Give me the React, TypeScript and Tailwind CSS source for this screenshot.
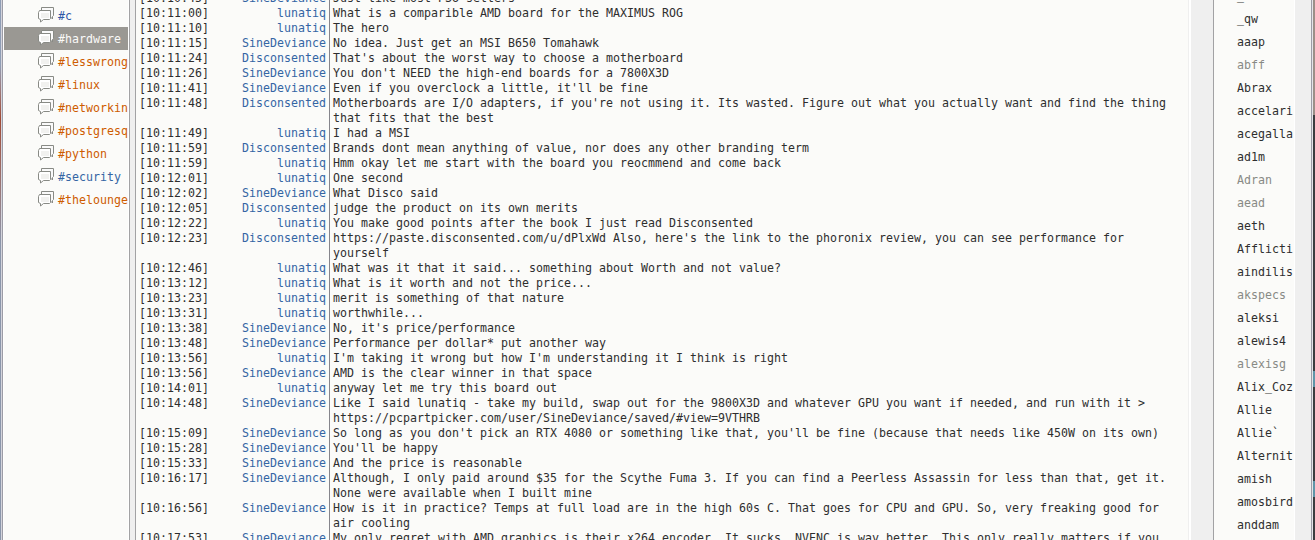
import React from "react";

interface Channel {
  name: string;
  color: string;
}

interface Message {
  time: string;
  nick: string;
  text: string;
}

const channels: Channel[] = [
  { name: "#c", color: "text-[#2e57a8]" },
  { name: "#hardware", color: "bg-[#9a9893] text-[#fafaf8]" },
  { name: "#lesswrong", color: "text-[#ce5c00]" },
  { name: "#linux", color: "text-[#ce5c00]" },
  { name: "#networkin", color: "text-[#ce5c00]" },
  { name: "#postgresq", color: "text-[#ce5c00]" },
  { name: "#python", color: "text-[#ce5c00]" },
  { name: "#security", color: "text-[#3465a4]" },
  { name: "#thelounge", color: "text-[#ce5c00]" },
];

const messages: Message[] = [
  { time: "10:10:45", nick: "SineDeviance", text: "Just like most PSU sellers" },
  { time: "10:11:00", nick: "lunatiq", text: "What is a comparible AMD board for the MAXIMUS ROG" },
  { time: "10:11:10", nick: "lunatiq", text: "The hero" },
  { time: "10:11:15", nick: "SineDeviance", text: "No idea. Just get an MSI B650 Tomahawk" },
  { time: "10:11:24", nick: "Disconsented", text: "That's about the worst way to choose a motherboard" },
  { time: "10:11:26", nick: "SineDeviance", text: "You don't NEED the high-end boards for a 7800X3D" },
  { time: "10:11:41", nick: "SineDeviance", text: "Even if you overclock a little, it'll be fine" },
  { time: "10:11:48", nick: "Disconsented", text: "Motherboards are I/O adapters, if you're not using it. Its wasted. Figure out what you actually want and find the thing\nthat fits that the best" },
  { time: "10:11:49", nick: "lunatiq", text: "I had a MSI" },
  { time: "10:11:59", nick: "Disconsented", text: "Brands dont mean anything of value, nor does any other branding term" },
  { time: "10:11:59", nick: "lunatiq", text: "Hmm okay let me start with the board you reocmmend and come back" },
  { time: "10:12:01", nick: "lunatiq", text: "One second" },
  { time: "10:12:02", nick: "SineDeviance", text: "What Disco said" },
  { time: "10:12:05", nick: "Disconsented", text: "judge the product on its own merits" },
  { time: "10:12:22", nick: "lunatiq", text: "You make good points after the book I just read Disconsented" },
  { time: "10:12:23", nick: "Disconsented", text: "https://paste.disconsented.com/u/dPlxWd Also, here's the link to the phoronix review, you can see performance for\nyourself" },
  { time: "10:12:46", nick: "lunatiq", text: "What was it that it said... something about Worth and not value?" },
  { time: "10:13:12", nick: "lunatiq", text: "What is it worth and not the price..." },
  { time: "10:13:23", nick: "lunatiq", text: "merit is something of that nature" },
  { time: "10:13:31", nick: "lunatiq", text: "worthwhile..." },
  { time: "10:13:38", nick: "SineDeviance", text: "No, it's price/performance" },
  { time: "10:13:48", nick: "SineDeviance", text: "Performance per dollar* put another way" },
  { time: "10:13:56", nick: "lunatiq", text: "I'm taking it wrong but how I'm understanding it I think is right" },
  { time: "10:13:56", nick: "SineDeviance", text: "AMD is the clear winner in that space" },
  { time: "10:14:01", nick: "lunatiq", text: "anyway let me try this board out" },
  { time: "10:14:48", nick: "SineDeviance", text: "Like I said lunatiq - take my build, swap out for the 9800X3D and whatever GPU you want if needed, and run with it >\nhttps://pcpartpicker.com/user/SineDeviance/saved/#view=9VTHRB" },
  { time: "10:15:09", nick: "SineDeviance", text: "So long as you don't pick an RTX 4080 or something like that, you'll be fine (because that needs like 450W on its own)" },
  { time: "10:15:28", nick: "SineDeviance", text: "You'll be happy" },
  { time: "10:15:33", nick: "SineDeviance", text: "And the price is reasonable" },
  { time: "10:16:17", nick: "SineDeviance", text: "Although, I only paid around $35 for the Scythe Fuma 3. If you can find a Peerless Assassin for less than that, get it.\nNone were available when I built mine" },
  { time: "10:16:56", nick: "SineDeviance", text: "How is it in practice? Temps at full load are in the high 60s C. That goes for CPU and GPU. So, very freaking good for\nair cooling" },
  { time: "10:17:53", nick: "SineDeviance", text: "My only regret with AMD graphics is their x264 encoder. It sucks. NVENC is way better. This only really matters if you" },
];

const users = [
  "_", "_qw", "aaap", "abff", "Abrax", "accelari", "acegalla", "ad1m",
  "Adran", "aead", "aeth", "Afflicti", "aindilis", "akspecs", "aleksi",
  "alewis4", "alexisg", "Alix_Coz", "Allie", "Allie`", "Alternit", "amish",
  "amosbird", "anddam",
];

const away = ["abff", "Adran", "aead", "akspecs", "alexisg"];

const ChatIcon: React.FC = () => (
  <svg width="17" height="17" viewBox="0 0 17 17" className="-mt-[2px] shrink-0">
    <path d="M3.5 1.5h12v8l-1 1v2.5l-2.5-2.5h-8.5z" fill="#fafafa" stroke="#888a85" strokeLinejoin="round" />
    <path d="M1.5 4.5h11v8l-1 1h-6l-3 2.5v-2.5l-2-1v-6z" fill="#fff" stroke="#888a85" strokeLinejoin="round" />
    <path d="M3 7h8v5h-8z" fill="#f1f1ef" />
  </svg>
);

const ChannelList: React.FC = () => (
  <div className="w-[126px] shrink-0 overflow-hidden border-x border-white bg-[#fbfbf9] pt-[4px]">
    {channels.map((channel) => (
      <div key={channel.name} className={`flex h-[23px] items-center overflow-hidden pl-[34px] ${channel.color}`}>
        <ChatIcon />
        <span className="ml-[3px] pt-[2px] leading-[23px]">{channel.name}</span>
      </div>
    ))}
  </div>
);

const MessageLog: React.FC = () => (
  <div className="min-w-0 flex-1 overflow-hidden bg-[#fbfbf9]">
    <div className="-mt-[9px]">
      {messages.map((message, index) => (
        <div key={index} className="flex leading-[15px]">
          <span className="w-[73px] shrink-0 pl-[3px]">[{message.time}]</span>
          <span className="w-[121px] shrink-0 border-r border-[#85858c] pr-[3px] text-right text-[#3465a4]">
            {message.nick}
          </span>
          <span className="whitespace-pre pl-[3px]">{message.text}</span>
        </div>
      ))}
    </div>
  </div>
);

const UserList: React.FC = () => (
  <div className="w-[81px] shrink-0 overflow-hidden border-r border-white bg-[#fbfbf9]">
    <div className="-mt-[15px] pl-[23px]">
      {users.map((user) => (
        <div key={user} className={`h-[23px] leading-[23px] ${away.includes(user) ? "text-[#888a85]" : ""}`}>
          {user}
        </div>
      ))}
    </div>
  </div>
);

const App: React.FC = () => {
  return (
    <div className="flex h-[540px] w-[1315px] overflow-hidden bg-[#efefef] font-['DejaVu_Sans_Mono',monospace] text-[11.6px] tracking-[0.02px] text-[#2e2e2e]">
      {/* Desktop showing past the window edge */}
      <div className="w-px shrink-0 bg-linear-to-b from-[#8f9db5] from-12% via-[#a04a34] via-22% to-[#8b96ab] to-45%" />
      <div className="w-px shrink-0 bg-[#d4d4dc]" />
      <div className="w-px shrink-0 bg-[#9c9ca6]" />
      <ChannelList />
      <div className="w-[7px] shrink-0 border-x border-[#a2a2a4]" />
      <MessageLog />
      <div className="w-[4px] shrink-0 border-x border-[#efefef] bg-white" />
      <div className="w-[21px] shrink-0" />
      <div className="w-px shrink-0 bg-[#a2a2a4]" />
      <UserList />
      <div className="w-[16px] shrink-0" />
      <div className="w-px shrink-0 bg-[#9c9ca6]" />
      <div className="w-px shrink-0 bg-[#e4e4e8]" />
      <div className="flex w-[2px] shrink-0 flex-col bg-[#3b3d40]">
        <div className="h-[115px] bg-[#9b8f88]" />
        <div className="mt-[256px] h-[16px] bg-[#5f95a8]" />
        <div className="mt-[94px] h-[16px] bg-[#5f95a8]" />
      </div>
    </div>
  );
};

export default App;
